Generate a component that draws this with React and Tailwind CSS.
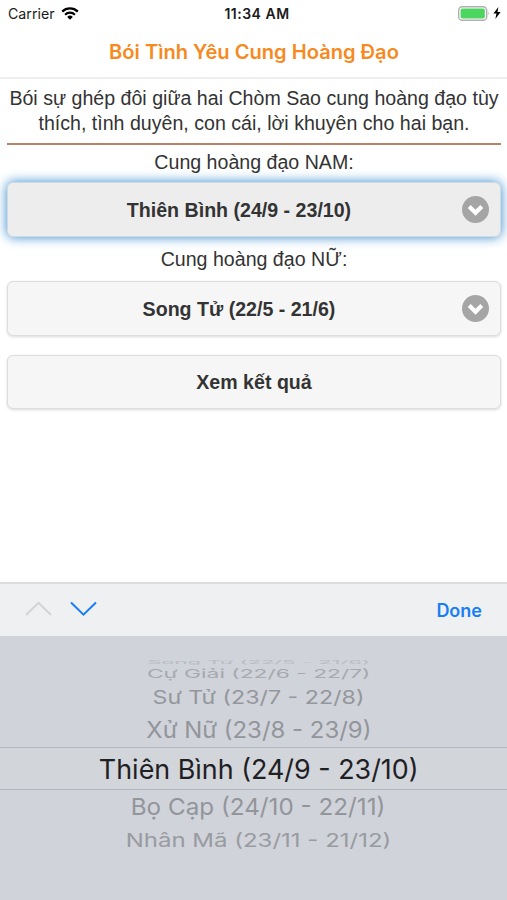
import React from "react";

const ROWS = [
  { text: "Song Tử (22/5 - 21/6)", box: "h-[5px]", look: "scale-x-[0.916] scale-y-[0.2] text-[#b9bcc1]" },
  { text: "Cự Giải (22/6 - 22/7)", box: "h-[20px]", look: "scale-x-[0.95] scale-y-[0.5] text-[#a6a9ae]" },
  { text: "Sư Tử (23/7 - 22/8)", box: "h-[27px]", look: "scale-x-[0.968] scale-y-[0.77] text-[#94979b]" },
  { text: "Xử Nữ (23/8 - 23/9)", box: "h-[36px] pt-[2px]", look: "scale-x-[0.997] scale-y-[0.95] text-[#92959a]" },
  { text: "Thiên Bình (24/9 - 23/10)", box: "h-[43px] border-y border-[#b3b6bb] bg-[#d2d5da] pt-[2px]", look: "scale-[1.12] text-[#1f2024]" },
  { text: "Bọ Cạp (24/10 - 22/11)", box: "h-[34px]", look: "scale-x-[1.01] scale-y-[0.98] text-[#92959a]" },
  { text: "Nhân Mã (23/11 - 21/12)", box: "h-[34px]", look: "scale-x-[1] scale-y-[0.77] text-[#989ba0]" },
];

function SelectButton({ children, focused }) {
  return (
    <button
      className={
        "flex h-[55px] w-full items-center rounded-[6px] border pr-[11px] text-[19.6px] font-bold text-[#333] " +
        (focused
          ? "border-[#cfdbe4] bg-[#ededed] shadow-[0_0_12px_#3388cc]"
          : "border-[#ddd] bg-[#f6f6f6] shadow-[0_1px_3px_rgba(0,0,0,0.15)]")
      }
    >
      <span className="grow pl-[8px] pt-[3px] text-center">{children}</span>
      <svg className="h-[27px] w-[27px]" viewBox="0 0 27 27" fill="none">
        <circle cx="13.5" cy="13.5" r="13.5" fill="#a5a5a5" />
        <path d="M7.2 10.5 13.5 16.8 19.8 10.5" stroke="#fff" strokeWidth="4.2" />
      </svg>
    </button>
  );
}

export default function App() {
  return (
    <div className="flex h-[900px] w-[507px] flex-col overflow-hidden bg-white font-['Liberation_Sans',sans-serif] text-[#333]">
      <header className="flex h-[79px] flex-none flex-col border-b-2 border-[#eeeeee] font-['Inter',sans-serif]">
        <div className="grid h-[28px] flex-none grid-cols-3 items-center pl-2 pr-[6px] text-[14.2px] leading-none text-[#1a1a1a]">
          <div className="flex items-center gap-[6px]">
            <span>Carrier</span>
            <svg className="h-[13px] w-[18px]" viewBox="0 0 18 13" fill="none" stroke="#000">
              <path d="M1.2 4.6a11.2 11.2 0 0 1 15.6 0" strokeWidth="2.3" />
              <path d="M4.1 7.7a7 7 0 0 1 9.8 0" strokeWidth="2.2" />
              <path d="M9 12.7 6.2 9.9a4 4 0 0 1 5.6 0Z" fill="#000" stroke="none" />
            </svg>
          </div>
          <span className="whitespace-nowrap pl-[5px] text-center text-[14px] font-semibold tracking-[0.5px]">11:34 AM</span>
          <div className="flex items-center justify-end gap-[3px] pb-[2px]">
            <svg className="h-[15px] w-[32px]" viewBox="0 0 32 15">
              <rect x="0.7" y="0.7" width="28" height="13.6" rx="3.6" fill="#fff" stroke="#b0aeb0" strokeWidth="1.4" />
              <rect x="2.6" y="2.6" width="24.2" height="9.8" rx="1.6" fill="#4cd55f" />
              <path d="M30 5.3q1.8 2.2 0 4.4Z" fill="#b0aeb0" />
            </svg>
            <svg className="h-[12px] w-[8px]" viewBox="0 0 8 12">
              <path d="M5.4 0 .4 6.6h3L2.4 12 7.6 5.1H4.5Z" fill="#000" />
            </svg>
          </div>
        </div>
        <h1 className="flex h-[49px] flex-none items-center justify-center whitespace-nowrap pl-px text-[20.1px] font-semibold text-[#f68a1f]">
          Bói Tình Yêu Cung Hoàng Đạo
        </h1>
      </header>

      <main className="flex grow flex-col pl-[7px] pr-[6px] pt-[7px] text-center text-[19.6px]">
        <p className="whitespace-nowrap leading-[25px]">
          Bói sự ghép đôi giữa hai Chòm Sao cung hoàng đạo tùy
          <br />
          thích, tình duyên, con cái, lời khuyên cho hai bạn.
        </p>
        <div className="mt-[7px] h-[2px] bg-[#b98268]" />
        <label className="flex h-[37px] items-center justify-center pb-px">Cung hoàng đạo NAM:</label>
        <SelectButton focused>Thiên Bình (24/9 - 23/10)</SelectButton>
        <label className="flex h-[44px] items-center justify-center pt-[2px]">Cung hoàng đạo NỮ:</label>
        <SelectButton>Song Tử (22/5 - 21/6)</SelectButton>
        <button className="mt-[19px] h-[54px] w-full rounded-[6px] border border-[#ddd] bg-[#f6f6f6] pt-px font-bold shadow-[0_1px_3px_rgba(0,0,0,0.15)]">
          Xem kết quả
        </button>
      </main>

      <section className="flex h-[318px] flex-none flex-col bg-[#d0d3da] font-['Inter',sans-serif]">
        <div className="flex h-[54px] flex-none items-center border-t-2 border-[#dcdddf] bg-[#eff0f2] px-[25px]">
          <svg className="mb-[2px] h-[16px] w-[72px]" viewBox="0 0 72 16" fill="none" strokeWidth="2">
            <path d="M1 14 13.5 1.8 26 14" stroke="#d2d3d5" />
            <path d="M46 1.5 58.5 13.7 71 1.5" stroke="#177ef5" />
          </svg>
          <span className="ml-auto text-[18px] font-semibold text-[#177ef5]">Done</span>
        </div>
        <div className="flex flex-col pt-[23px]">
          {ROWS.map((row) => (
            <div key={row.text} className={"flex flex-none items-center justify-center pl-[10px] " + row.box}>
              <span className={"inline-block whitespace-nowrap text-[24px] leading-none " + row.look}>{row.text}</span>
            </div>
          ))}
        </div>
      </section>
    </div>
  );
}
